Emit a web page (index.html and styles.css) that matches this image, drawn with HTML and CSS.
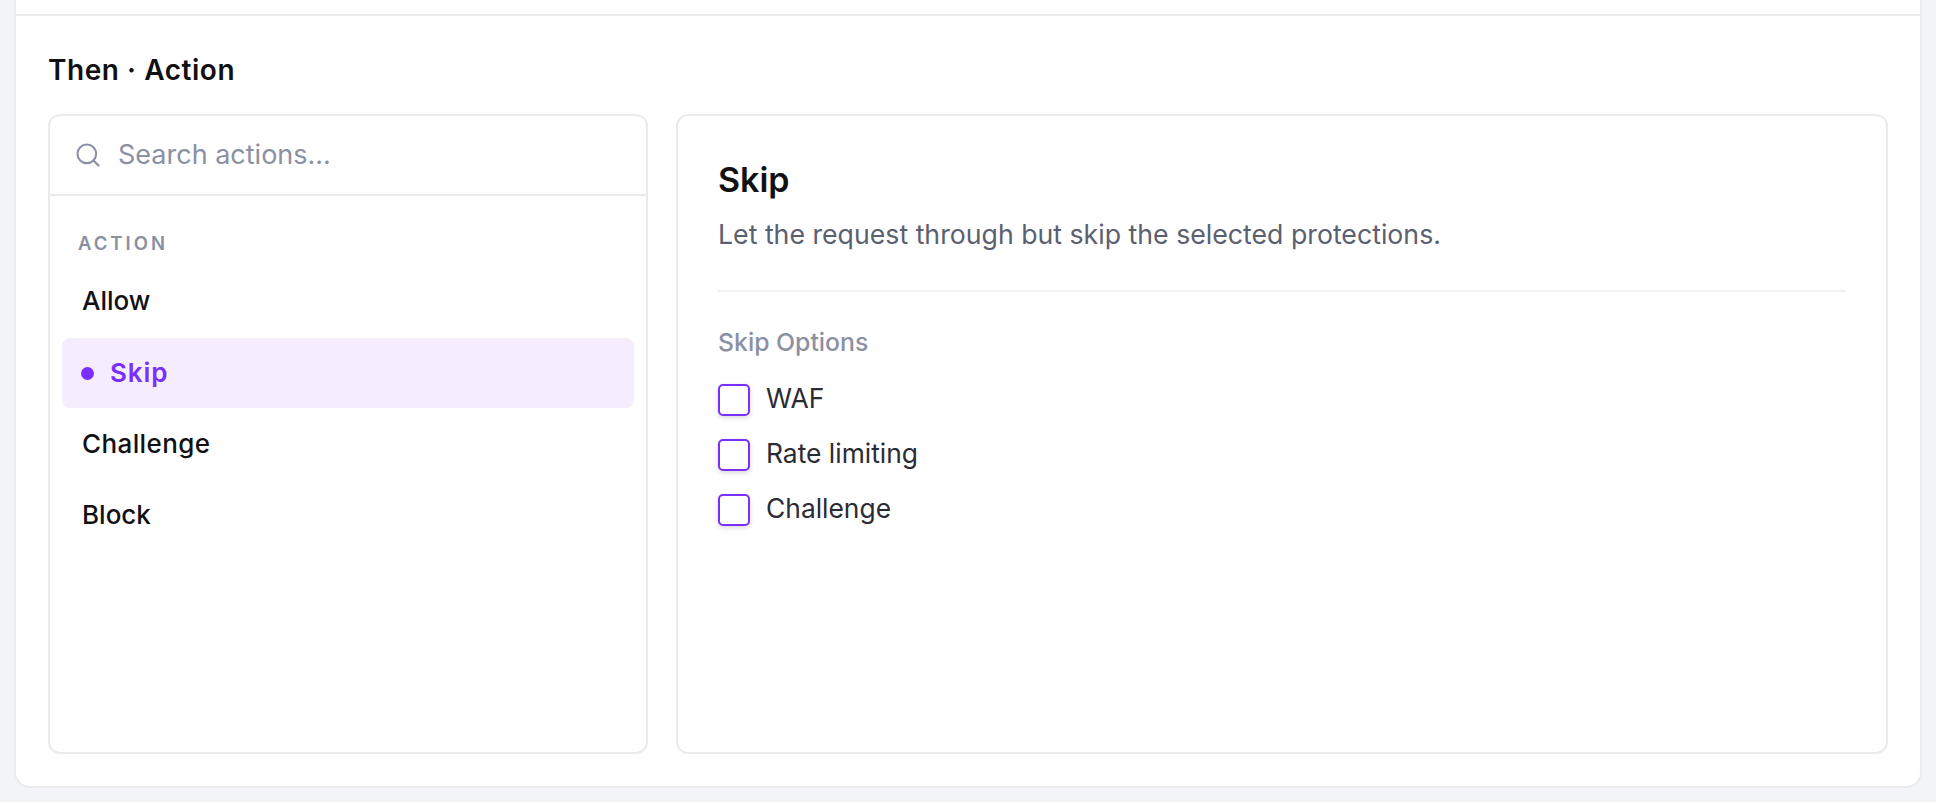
FILE: index.html
```html
<!DOCTYPE html>
<html lang="en">
<head>
    <meta charset="UTF-8">
    <meta name="viewport" content="width=device-width, initial-scale=1.0">
    <title>Then Action</title>
    <link rel="stylesheet" href="styles.css">
</head>
<body>
    <div class="rule-card">
        <div class="prev-section"></div>

        <section class="action-section">
            <h2 class="section-title">Then · Action</h2>

            <div class="action-grid">
                <div class="picker">
                    <div class="search-row">
                        <svg class="search-icon" viewBox="0 0 24 24" fill="none" stroke="currentColor" stroke-width="1.8" stroke-linecap="round" stroke-linejoin="round">
                            <circle cx="11" cy="11" r="8"/>
                            <path d="m21 21-4.3-4.3"/>
                        </svg>
                        <span class="search-text">Search actions...</span>
                    </div>
                    <div class="picker-list">
                        <div class="group-label">ACTION</div>
                        <div class="picker-item">Allow</div>
                        <div class="picker-item active"><span class="dot"></span>Skip</div>
                        <div class="picker-item wide">Challenge</div>
                        <div class="picker-item">Block</div>
                    </div>
                </div>

                <div class="detail">
                    <h3 class="detail-title">Skip</h3>
                    <p class="detail-desc">Let the request through but skip the selected protections.</p>
                    <div class="detail-divider"></div>
                    <div class="options-label">Skip Options</div>
                    <div class="option"><span class="checkbox"></span><span class="option-text">WAF</span></div>
                    <div class="option"><span class="checkbox"></span><span class="option-text">Rate limiting</span></div>
                    <div class="option"><span class="checkbox"></span><span class="option-text">Challenge</span></div>
                </div>
            </div>
        </section>
    </div>
</body>
</html>
```

FILE: styles.css
```css
* {
    box-sizing: border-box;
}

body {
    margin: 0;
    padding: 0 14px 14px;
    background: #f3f4f8;
    font-family: Inter, "Liberation Sans", sans-serif;
    color: #111114;
}

.rule-card {
    background: #fff;
    border: 2px solid #ebebed;
    border-top: none;
    border-radius: 0 0 16px 16px;
}

.prev-section {
    height: 16px;
    border-bottom: 2px solid #ebebed;
}

.action-section {
    padding: 32px;
}

.section-title {
    margin: 0 0 24px;
    padding-top: 2px;
    font-size: 28px;
    line-height: 40px;
    font-weight: 600;
    letter-spacing: 0.55px;
}

.action-grid {
    display: flex;
    gap: 28px;
    height: 640px;
}

.picker {
    width: 600px;
    border: 2px solid #ebebed;
    border-radius: 12px;
}

.search-row {
    display: flex;
    align-items: center;
    gap: 16px;
    height: 80px;
    padding: 0 24px;
    border-bottom: 2px solid #ebebed;
}

.search-icon {
    width: 28px;
    height: 28px;
    color: #8b90a3;
}

.search-text {
    padding-bottom: 2px;
    font-size: 27px;
    color: #8b90a3;
}

.picker-list {
    padding: 12px;
    display: flex;
    flex-direction: column;
    gap: 1.3px;
}

.group-label {
    padding: 24px 16px 11px;
    font-size: 18.5px;
    line-height: 22px;
    font-weight: 600;
    letter-spacing: 3px;
    color: #8b90a3;
}

.picker-item {
    display: flex;
    align-items: center;
    height: 70px;
    padding: 0 20px 1px;
    font-size: 26px;
    font-weight: 500;
    border-radius: 8px;
}

.picker-item.wide {
    letter-spacing: 0.4px;
}

.picker-item.active {
    background: #f5edfe;
    color: #7b2fff;
    font-weight: 600;
    letter-spacing: 0.9px;
}

.dot {
    width: 13px;
    height: 13px;
    margin: 2px 16px 0 -1px;
    border-radius: 50%;
    background: #7b2fff;
}

.detail {
    flex: 1;
    padding: 42px 40px;
    border: 2px solid #ebebed;
    border-radius: 12px;
}

.detail-title {
    margin: 0;
    font-size: 34px;
    line-height: 44px;
    font-weight: 600;
}

.detail-desc {
    margin: 12px 0 0;
    font-size: 26.7px;
    line-height: 40px;
    color: #5b6070;
}

.detail-divider {
    height: 2px;
    margin: 36px 0 0;
    background: #f1f1f3;
}

.options-label {
    margin: 35px 0 15.5px;
    font-size: 24.8px;
    line-height: 30px;
    font-weight: 500;
    color: #8b90a3;
}

.option {
    display: flex;
    align-items: center;
    gap: 16px;
    height: 55px;
    font-size: 26.4px;
    color: #2b2b33;
}

.option-text {
    padding-bottom: 4px;
}

.checkbox {
    width: 32px;
    height: 32px;
    border: 2px solid #7b2fff;
    border-radius: 5px;
    background: #fff;
    box-shadow: 0 2px 5px rgba(30, 30, 60, 0.16);
}
```
